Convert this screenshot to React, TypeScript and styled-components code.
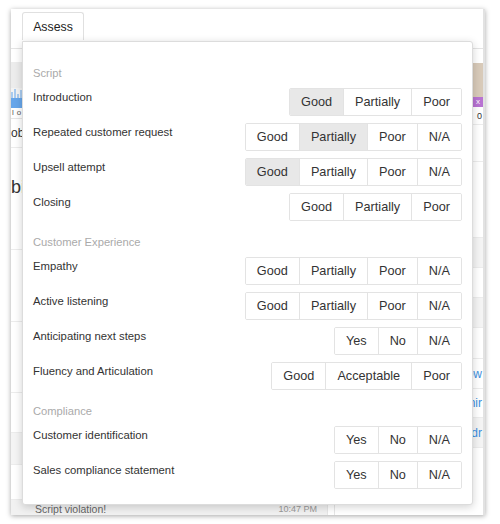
import React from 'react';
import styled, { createGlobalStyle } from 'styled-components';

const GlobalStyle = createGlobalStyle`
  html, body {
    margin: 0;
    padding: 0;
    background: #fff;
    font-family: "Liberation Sans", Arial, sans-serif;
    color: #333;
  }
`;

const Page = styled.div`
  width: 500px;
  height: 524px;
  padding: 9px 0 0 11px;
  box-sizing: border-box;
`;

const Window = styled.div`
  position: relative;
  width: 474px;
  height: 506px;
  background: #fff;
  overflow: hidden;
  box-shadow: 0 1px 5px rgba(0, 0, 0, 0.35);
  border-right: 2px solid #e2e2e2;
  box-sizing: border-box;
`;

const TabBar = styled.div`
  height: 40px;
  border-bottom: 1px solid #e4e4e4;
  box-sizing: border-box;
  display: flex;
  align-items: flex-end;
  padding-left: 11px;
`;

const Tab = styled.div`
  width: 62px;
  height: 28px;
  margin-bottom: 8px;
  box-sizing: border-box;
  border: 1px solid #e0e0e0;
  border-bottom: none;
  border-radius: 3px 3px 0 0;
  font-size: 12.3px;
  line-height: 29px;
  text-align: center;
  color: #222;
  background: #fff;
`;

const Body = styled.div`
  display: grid;
  grid-template-columns: 317px 7px 1fr;
  height: 466px;
`;

const LeftPane = styled.div`
  border-right: 1px solid #e6e6e6;
  display: flex;
  flex-direction: column;
`;

const Gutter = styled.div`
  border-right: 1px solid #e6e6e6;
`;

const RightPane = styled.div`
  display: flex;
  flex-direction: column;
`;

const Chart = styled.div`
  margin-top: 13px;
  height: 26px;
  background: #ececec;
`;

const Bars = styled.div`
  height: 10px;
  display: flex;
  align-items: flex-end;
  gap: 1px;
  background: #f3f3f3;
`;

const Bar = styled.div`
  width: 2px;
  background: #a9cbef;
`;

const BlueStrip = styled.div`
  height: 10px;
  background: #67a6ea;
`;

const Axis = styled.div`
  height: 11px;
  box-sizing: border-box;
  font-size: 8px;
  letter-spacing: 3px;
  color: #555;
  padding-left: 1px;
  border-bottom: 1px solid #e6e6e6;
`;

const ListRow = styled.div<{ $h: number; $shade?: boolean; $size?: number; $end?: boolean }>`
  height: ${(p) => p.$h}px;
  flex-shrink: 0;
  box-sizing: border-box;
  border-bottom: 1px solid #ececec;
  background: ${(p) => (p.$shade ? '#f4f4f4' : 'transparent')};
  font-size: ${(p) => p.$size ?? 12}px;
  display: flex;
  align-items: center;
  justify-content: ${(p) => (p.$end ? 'flex-end' : 'flex-start')};
  padding: 0 1px 0 0;
  color: #333;
  white-space: nowrap;
`;

const BigRow = styled(ListRow)`
  align-items: flex-start;
  padding-top: 28px;
  line-height: 22px;
`;

const FootRow = styled.div`
  height: 15px;
  flex-shrink: 0;
  background: #f1f1f1;
  display: flex;
  align-items: flex-end;
  justify-content: space-between;
  padding: 0 10px 0 24px;
  font-size: 10.5px;
  line-height: 12px;
  color: #666;
`;

const Time = styled.span`
  font-size: 9px;
  color: #999;
`;

const Media = styled.div`
  margin-top: 14px;
  height: 34px;
  flex-shrink: 0;
  background: #d8cab9;
`;

const Tag = styled.div`
  height: 10px;
  flex-shrink: 0;
  background: #b873d2;
  color: #fff;
  font-size: 8px;
  line-height: 10px;
  text-align: right;
  padding-right: 3px;
`;

const Link = styled.span`
  color: #3d8fe0;
  font-size: 12px;
`;

const Popover = styled.div`
  position: absolute;
  left: 11px;
  top: 32px;
  width: 451px;
  height: 464px;
  box-sizing: border-box;
  background: #fff;
  border: 1px solid #dcdcdc;
  border-radius: 0 3px 3px 3px;
  box-shadow: 0 2px 8px rgba(0, 0, 0, 0.18);
  padding: 23px 10px 17px 10px;
  display: flex;
  flex-direction: column;
  gap: 13px;
`;

const Section = styled.div`
  display: flex;
  flex-direction: column;
  gap: 7px;
`;

const SectionTitle = styled.div`
  font-size: 11.2px;
  line-height: 16px;
  color: #aaa;
`;

const Row = styled.div`
  display: flex;
  justify-content: space-between;
  align-items: flex-start;
`;

const Label = styled.div`
  font-size: 11.3px;
  line-height: 18px;
  color: #333;
`;

const Group = styled.div`
  display: flex;
  border: 1px solid #e3e3e3;
  border-radius: 2px;
  overflow: hidden;
`;

const Option = styled.div<{ $active: boolean }>`
  padding: 0 11px;
  line-height: 26px;
  font-size: 12.7px;
  color: #333;
  background: ${(p) => (p.$active ? '#e8e8e8' : '#fff')};
  & + & {
    border-left: 1px solid #e3e3e3;
  }
`;

type Item = { label: string; options: string[]; selected?: number };

const GPP = ['Good', 'Partially', 'Poor'];
const GPPN = ['Good', 'Partially', 'Poor', 'N/A'];
const YNN = ['Yes', 'No', 'N/A'];

const sections: { title: string; items: Item[] }[] = [
  {
    title: 'Script',
    items: [
      { label: 'Introduction', options: GPP, selected: 0 },
      { label: 'Repeated customer request', options: GPPN, selected: 1 },
      { label: 'Upsell attempt', options: GPPN, selected: 0 },
      { label: 'Closing', options: GPP },
    ],
  },
  {
    title: 'Customer Experience',
    items: [
      { label: 'Empathy', options: GPPN },
      { label: 'Active listening', options: GPPN },
      { label: 'Anticipating next steps', options: YNN },
      { label: 'Fluency and Articulation', options: ['Good', 'Acceptable', 'Poor'] },
    ],
  },
  {
    title: 'Compliance',
    items: [
      { label: 'Customer identification', options: YNN },
      { label: 'Sales compliance statement', options: YNN },
    ],
  },
];

const barHeights = [6, 9, 4, 8, 10, 5, 7, 9, 3, 8, 6, 10];

const App = () => {
  return (
    <Page>
      <GlobalStyle />
      <Window>
        <TabBar>
          <Tab>Assess</Tab>
        </TabBar>
        <Body>
          <LeftPane>
            <Chart />
            <Bars>
              {barHeights.map((h, i) => (
                <Bar key={i} style={{ height: h }} />
              ))}
            </Bars>
            <BlueStrip />
            <Axis>lo</Axis>
            <ListRow $h={29}>ob</ListRow>
            <BigRow $h={102} $size={18}>bi</BigRow>
            <ListRow $h={72} />
            <ListRow $h={71} />
            <ListRow $h={40} />
            <ListRow $h={32} $shade />
            <ListRow $h={35} />
            <FootRow>
              <span>Script violation!</span>
              <Time>10:47 PM</Time>
            </FootRow>
          </LeftPane>
          <Gutter />
          <RightPane>
            <Media />
            <Tag>x</Tag>
            <ListRow $h={18} $size={9} $end>
              0
            </ListRow>
            <ListRow $h={37} />
            <ListRow $h={76} />
            <ListRow $h={30} $shade />
            <ListRow $h={30} />
            <ListRow $h={30} $shade />
            <ListRow $h={31} />
            <ListRow $h={30} $end>
              <Link>ow</Link>
            </ListRow>
            <ListRow $h={29} $end>
              <Link>nir</Link>
            </ListRow>
            <ListRow $h={30} $shade $end>
              <Link>dr</Link>
            </ListRow>
          </RightPane>
        </Body>
        <Popover>
          {sections.map((s) => (
            <Section key={s.title}>
              <SectionTitle>{s.title}</SectionTitle>
              {s.items.map((it) => (
                <Row key={it.label}>
                  <Label>{it.label}</Label>
                  <Group>
                    {it.options.map((o, i) => (
                      <Option key={o} $active={it.selected === i}>
                        {o}
                      </Option>
                    ))}
                  </Group>
                </Row>
              ))}
            </Section>
          ))}
        </Popover>
      </Window>
    </Page>
  );
};

export default App;
